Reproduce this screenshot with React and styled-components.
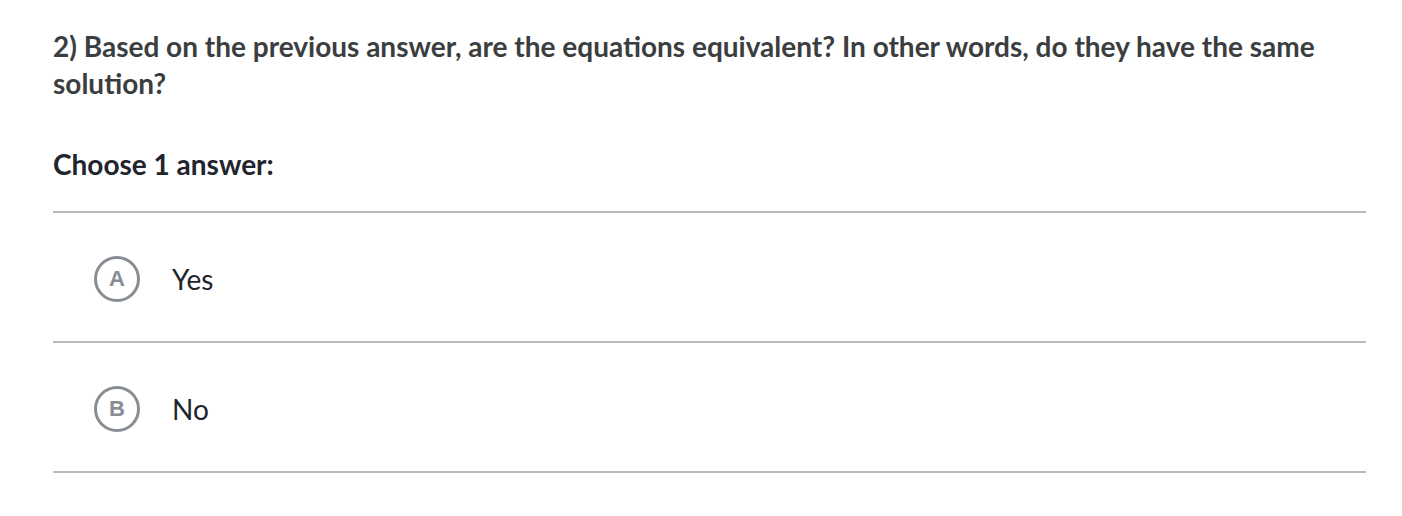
import React from 'react'
import styled, { createGlobalStyle } from 'styled-components'

const GlobalStyle = createGlobalStyle`
    body {
        margin: 0;
        background: #fff;
        font-family: Lato, "Open Sans", sans-serif;
    }
`

const choices = [
    { letter: 'A', text: 'Yes' },
    { letter: 'B', text: 'No' },
]

const App = () => {
    return (
        <Page>
            <GlobalStyle />
            <Question>
                2) Based on the previous answer, are the equations equivalent? In other words, do they have the same solution?
            </Question>
            <Prompt>Choose 1 answer:</Prompt>
            <ChoiceList>
                {choices.map(c => (
                    <Choice key={c.letter}>
                        <Bubble>{c.letter}</Bubble>
                        <ChoiceText>{c.text}</ChoiceText>
                    </Choice>
                ))}
            </ChoiceList>
        </Page>
    )
}

const Page = styled.div`
    padding: 28px 36px 0 53px;
`

const Question = styled.div`
    font-size: 28px;
    font-weight: 700;
    line-height: 37px;
    color: #3b3e40;
`

const Prompt = styled.div`
    margin-top: 44px;
    font-size: 28px;
    font-weight: 700;
    line-height: 37px;
    color: #21242c;
`

const ChoiceList = styled.div`
    margin-top: 28px;
    border-top: 2px solid #bababa;
`

const Choice = styled.div`
    box-sizing: border-box;
    display: flex;
    align-items: center;
    height: 130px;
    padding: 4px 0 0 41px;
    border-bottom: 2px solid #bababa;
`

const Bubble = styled.div`
    box-sizing: border-box;
    width: 46px;
    height: 46px;
    border-radius: 50%;
    border: 3px solid #888d93;
    display: flex;
    align-items: center;
    justify-content: center;
    font-family: "Liberation Sans", Arial, sans-serif;
    font-weight: 700;
    font-size: 22px;
    color: #888d93;
`

const ChoiceText = styled.div`
    margin-left: 32px;
    font-size: 28px;
    color: #21242c;
`

export default App
